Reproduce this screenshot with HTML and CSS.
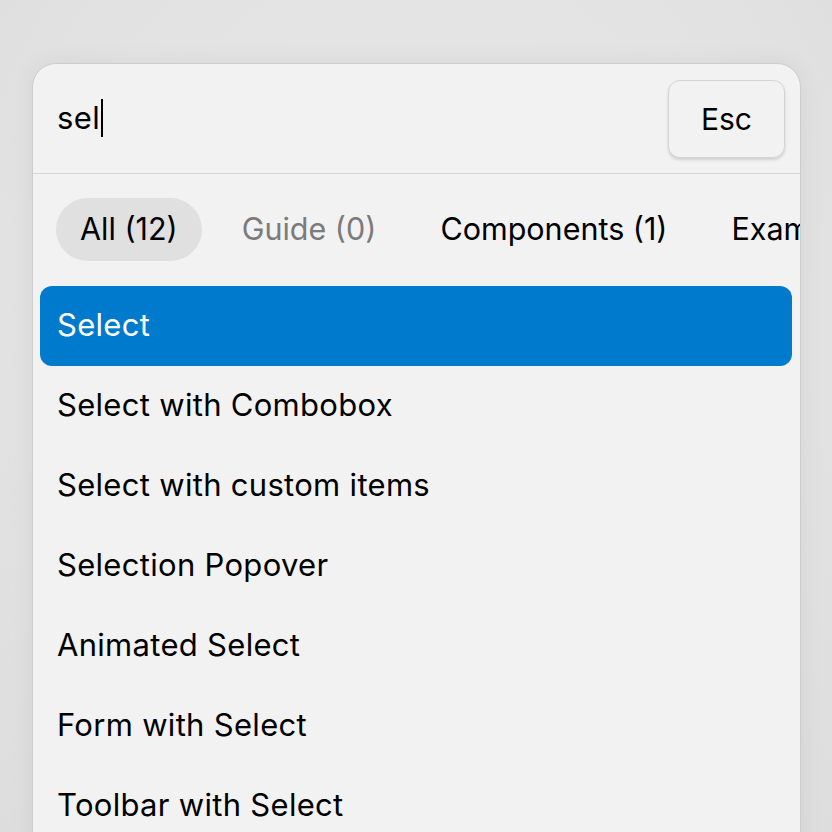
FILE: index.html
```html
<!DOCTYPE html>
<html lang="en">
<head>
<meta charset="utf-8">
<link rel="stylesheet" href="styles.css">
</head>
<body>
<div class="palette">
  <div class="search">
    <div class="query">sel<span class="caret"></span></div>
    <button class="esc">Esc</button>
  </div>
  <div class="tabs">
    <span class="tab active">All (12)</span>
    <span class="tab muted">Guide (0)</span>
    <span class="tab">Components (1)</span>
    <span class="tab">Examples (11)</span>
  </div>
  <ul class="results">
    <li class="item selected">Select</li>
    <li class="item">Select with Combobox</li>
    <li class="item">Select with custom items</li>
    <li class="item">Selection Popover</li>
    <li class="item">Animated Select</li>
    <li class="item">Form with Select</li>
    <li class="item">Toolbar with Select</li>
  </ul>
</div>
</body>
</html>
```

FILE: styles.css
```css
html, body {
  margin: 0;
  height: 100%;
  overflow: hidden;
}
body {
  background: radial-gradient(ellipse at 50% 40%, #e6e6e6 0%, #e3e3e3 60%, #dddddd 100%);
  padding: 63px 31px 0 32px;
  box-sizing: border-box;
  font-family: Inter, "Noto Sans", sans-serif;
  color: #000;
}
.palette {
  background: #f2f2f2;
  border: 1px solid #cdcdcd;
  border-radius: 24px;
  height: 900px;
  overflow: hidden;
  box-shadow: 0 0 24px rgba(0,0,0,0.06);
}
.search {
  height: 109px;
  display: flex;
  align-items: center;
  justify-content: space-between;
  padding: 0 15px 0 24px;
  border-bottom: 1px solid #d6d6d6;
}
.query {
  font-size: 31px;
  letter-spacing: 0.4px;
  display: flex;
  align-items: center;
  padding-bottom: 2px;
}
.caret {
  display: inline-block;
  width: 2px;
  height: 38px;
  background: #000;
  margin-left: 1px;
}
.esc {
  width: 117px;
  height: 78px;
  margin-top: 1px;
  border: 1px solid #d4d4d4;
  border-radius: 12px;
  background: #f2f2f2;
  box-shadow: 0 2px 3px rgba(0,0,0,0.14);
  font: inherit;
  font-size: 30px;
  color: #000;
  padding-bottom: 2px;
}
.tabs {
  display: flex;
  gap: 16px;
  padding: 24px 0 0 23px;
  white-space: nowrap;
}
.tab {
  height: 63px;
  box-sizing: border-box;
  display: flex;
  align-items: center;
  padding: 0 24px 2px;
  font-size: 30.5px;
  border-radius: 32px;
  flex: none;
}
.tab.active {
  background: #e0e0e0;
}
.tab.muted {
  color: #7b7b7b;
}
.results {
  list-style: none;
  margin: 25px 0 0;
  padding: 0 8px 0 7px;
}
.item {
  height: 80px;
  box-sizing: border-box;
  display: flex;
  align-items: center;
  padding: 0 17px 3px;
  font-size: 31px;
  letter-spacing: 0.3px;
  border-radius: 12px;
}
.item.selected {
  background: #007acc;
  color: #fff;
}
```
